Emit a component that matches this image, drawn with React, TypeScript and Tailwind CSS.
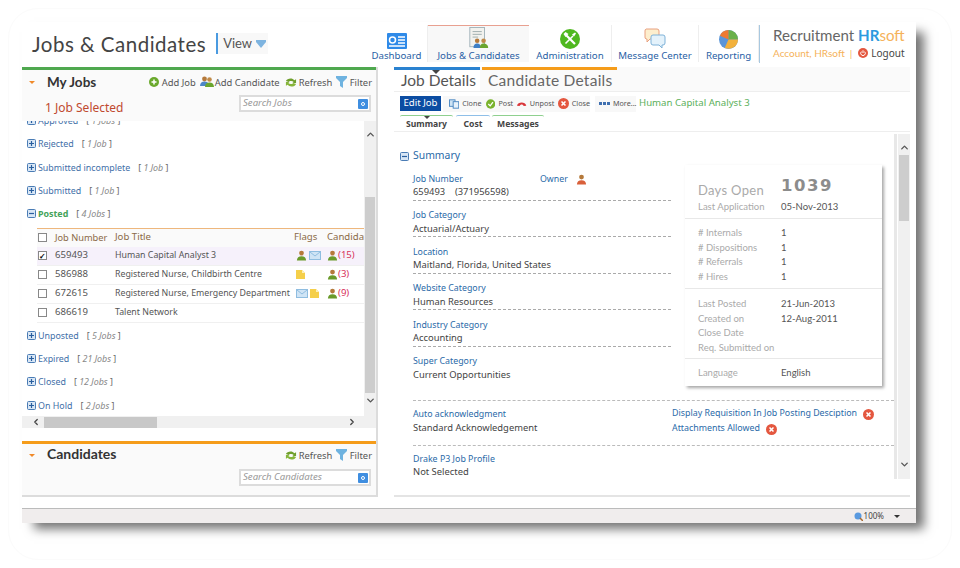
import { ChevronDown, ChevronLeft, ChevronRight, ChevronUp } from "lucide-react";

const bodyFont = { fontFamily: '"Noto Sans", sans-serif' };
const titleFont = { fontFamily: "Lato, sans-serif" };

const Person = ({ color = "#6a9a2a" }: { color?: string }) => (
  <svg width="11" height="11" viewBox="0 0 12 12" className="shrink-0">
    <circle cx="6" cy="3.4" r="2.6" fill="#b5793a" />
    <path d="M1 11.5c0-3.4 2-4.8 5-4.8s5 1.4 5 4.8z" fill={color} />
  </svg>
);

const People = () => (
  <svg width="14" height="12" viewBox="0 0 14 12" className="shrink-0">
    <circle cx="4.500" cy="3" r="2.400" fill="#b5793a" />
    <path d="M0 10c0-3 2-4.400 4.500-4.400S9 7 9 10z" fill="#4c86c6" />
    <circle cx="9.500" cy="3.500" r="2.300" fill="#c08a48" />
    <path d="M5 11c0-3 2-4.400 4.500-4.400S14 8 14 11z" fill="#6aa52e" />
  </svg>
);

const Mail = () => (
  <svg width="12" height="9" viewBox="0 0 12 9" className="shrink-0">
    <rect x="0.5" y="0.5" width="11" height="8" fill="#cfe4f5" stroke="#8fbde0" />
    <path d="M1 1l5 4 5-4" fill="none" stroke="#8fbde0" />
  </svg>
);

const Note = () => (
  <svg width="9" height="9" viewBox="0 0 9 9" className="shrink-0">
    <path d="M0 0h6l3 3v6H0z" fill="#f5cf4a" />
    <path d="M6 0v3h3z" fill="#fdf0b8" />
  </svg>
);

const PlusBox = ({ minus }: { minus?: boolean }) => (
  <svg width="9" height="9" viewBox="0 0 9 9" className="shrink-0">
    <rect x="0.5" y="0.5" width="8" height="8" rx="1" fill="#d8e6f5" stroke="#4a7cb5" />
    <path d={minus ? "M2 4.5h5" : "M2 4.5h5M4.5 2v5"} stroke="#2a5f9e" strokeWidth="1.2" />
  </svg>
);

const RedX = ({ size = 10 }: { size?: number }) => (
  <svg width={size} height={size} viewBox="0 0 10 10" className="shrink-0">
    <circle cx="5" cy="5" r="5" fill="#e4573f" />
    <path d="M3.2 3.2l3.6 3.6M6.8 3.2l-3.6 3.6" stroke="#fff" strokeWidth="1.4" />
  </svg>
);

const Funnel = () => (
  <svg width="11" height="12" viewBox="0 0 11 12" className="-mt-[3px] shrink-0">
    <path d="M0 0h11v2L7 6v6L4 10V6L0 2z" fill="#6fb3e0" />
  </svg>
);

const RefreshIcon = () => (
  <svg width="12" height="11" viewBox="0 0 13 11" className="-mt-[2px] shrink-0">
    <path d="M1 4c1-3 7-4 9-1l2-1v4H8l1.500-1C8 3.500 5 3.500 4 5z" fill="#6f9f2c" />
    <path d="M12 7c-1 3-7 4-9 1L1 9V5h4L3.500 6C5 7.500 8 7.500 9 6z" fill="#86b53a" />
  </svg>
);

const SearchBox = ({ placeholder }: { placeholder: string }) => (
  <div className="flex h-[17px] w-[132px] items-center justify-between border-2 border-[#dcdcdc] bg-white pl-[2px] pr-[1px]">
    <span className="text-[9.6px] italic text-[#999]">{placeholder}</span>
    <span className="flex h-[10px] w-[10px] items-center justify-center rounded-[1px] bg-[#3f8ee0]">
      <span className="h-[4px] w-[4px] rounded-full border border-white" />
    </span>
  </div>
);

const PanelActions = ({ full }: { full?: boolean }) => (
  <div className="mt-[2px] flex items-center text-[9.4px] text-[#555]">
    {full && (
      <>
        <svg width="10" height="10" viewBox="0 0 10 10" className="-mt-[2px] mr-[3px]">
          <circle cx="5" cy="5" r="5" fill="#6aa92c" />
          <path d="M2.500 5h5M5 2.500v5" stroke="#fff" strokeWidth="1.500" />
        </svg>
        <span className="mr-[3px] w-[35px] whitespace-nowrap">Add Job</span>
        <span className="-mt-[2px] mr-[1px] flex">
          <People />
        </span>
        <span className="mr-[4px] w-[66px] whitespace-nowrap">Add Candidate</span>
      </>
    )}
    <RefreshIcon />
    <span className="ml-[2px] mr-[4px] w-[33px] whitespace-nowrap">Refresh</span>
    <Funnel />
    <span className="ml-[3px]">Filter</span>
  </div>
);

const groupsTop = [
  { name: "Approved", count: "1 Jobs" },
  { name: "Rejected", count: "1 Job" },
  { name: "Submitted incomplete", count: "1 Job" },
  { name: "Submitted", count: "1 Job" },
];

const groupsBottom = [
  { name: "Unposted", count: "5 Jobs" },
  { name: "Expired", count: "21 Jobs" },
  { name: "Closed", count: "12 Jobs" },
  { name: "On Hold", count: "2 Jobs" },
];

const jobs = [
  { num: "659493", title: "Human Capital Analyst 3", flags: ["person", "mail"], count: "(15)", checked: true },
  { num: "586988", title: "Registered Nurse, Childbirth Centre", flags: ["note"], count: "(3)" },
  { num: "672615", title: "Registered Nurse, Emergency Department", flags: ["mail", "note"], count: "(9)" },
  { num: "686619", title: "Talent Network", flags: [], count: "" },
];

const GroupRow = ({ name, count }: { name: string; count: string }) => (
  <div className="flex h-[23.33px] items-center pl-[5px] text-[8.9px]">
    <PlusBox />
    <span className="ml-[2px] text-[#3f6fa8]">{name}</span>
    <span className="ml-[8px] text-[#666]">
      [ <span className="italic text-[#888]">{count}</span> ]
    </span>
  </div>
);

const Checkbox = ({ checked }: { checked?: boolean }) => (
  <span className="flex h-[9px] w-[9px] shrink-0 items-center justify-center border border-[#888] bg-white text-[8px] font-bold leading-none text-black">
    {checked ? "✓" : ""}
  </span>
);

const MyJobs = () => (
  <div className="flex min-h-0 flex-1 overflow-hidden">
    <div className="min-w-0 flex-1 overflow-hidden">
      <div className="mt-[-12px]">
        {groupsTop.map((g) => (
          <GroupRow key={g.name} {...g} />
        ))}
        <div className="flex h-[23.33px] items-center pl-[5px] text-[8.9px]">
          <PlusBox minus />
          <span className="ml-[2px] font-bold text-[#45a35a]">Posted</span>
          <span className="ml-[8px] text-[#666]">
            [ <span className="italic text-[#888]">4 Jobs</span> ]
          </span>
        </div>
        <div className="ml-[15px] mt-[2px] w-[340px] overflow-hidden border-t border-[#eeb77d]">
          <div className="flex h-[18px] items-center bg-[#fafafa] pl-[1px] text-[#8a6a48]">
            <Checkbox />
            <span className="ml-[8px] w-[60px] shrink-0 text-[9.25px]">Job Number</span>
            <span className="w-[179px] shrink-0">Job Title</span>
            <span className="w-[33px] shrink-0">Flags</span>
            <span className="shrink-0">Candidates</span>
          </div>
          {jobs.map((j) => (
            <div
              key={j.num}
              className={`flex h-[19px] items-center border-b border-[#f0f0f0] pl-[1px] text-[#555] ${j.checked ? "bg-[#f6f1fb]" : "bg-white"}`}
            >
              <Checkbox checked={j.checked} />
              <span className="ml-[8px] w-[60px] shrink-0">{j.num}</span>
              <span className="w-[179px] shrink-0 whitespace-nowrap text-[8.8px]">{j.title}</span>
              <span className="flex w-[33px] shrink-0 items-center gap-[2px] pl-[2px]">
                {j.flags.map((f) =>
                  f === "person" ? <Person key={f} /> : f === "mail" ? <Mail key={f} /> : <Note key={f} />,
                )}
              </span>
              {j.count && (
                <span className="flex items-center text-[#d8315b]">
                  <Person />
                  {j.count}
                </span>
              )}
            </div>
          ))}
        </div>
        <div className="mt-[1px]">
          {groupsBottom.map((g) => (
            <GroupRow key={g.name} {...g} />
          ))}
        </div>
      </div>
    </div>
    <div className="flex w-[12px] shrink-0 flex-col items-center bg-[#f0f0f0] text-[#555]">
      <ChevronUp size={11} strokeWidth={3} className="mt-[8px]" />
      <div className="mt-[57px] h-[196px] w-[10px] bg-[#cdcdcd]" />
      <ChevronDown size={11} strokeWidth={3} className="mt-[2px]" />
    </div>
  </div>
);

const Field = ({ label, value, owner, last }: { label: string; value: string; owner?: boolean; last?: boolean }) => (
  <div className={`h-[36.5px] pt-[8px] ${last ? "" : "border-b border-dashed border-[#aaa]"}`}>
    <div className="flex h-[14px] items-center text-[8.8px] text-[#2a6aa8]">
      <span className="w-[127px] shrink-0">{label}</span>
      {owner && (
        <span className="flex items-center gap-[8px]">
          Owner <Person color="#d9603a" />
        </span>
      )}
    </div>
    <div className="h-[12px] whitespace-pre text-[9.4px] leading-[12px] text-[#444]">{value}</div>
  </div>
);

const CardRow = ({ label, value }: { label: string; value?: string }) => (
  <div className="flex h-[14.6px] items-center">
    <span className="w-[83px] whitespace-nowrap text-[#aaa]">{label}</span>
    {value && <span className="text-[#555]">{value}</span>}
  </div>
);

const StatsCard = () => (
  <div className="mt-[2px] w-[197px] shrink-0 bg-white text-[9.5px] shadow-[2px_2px_3px_rgba(0,0,0,0.35)]" style={titleFont}>
    <div className="h-[54px] border-b border-[#e8e8e8] pl-[13px] pt-[10px]">
      <div className="flex h-[25px] items-center">
        <span className="mt-[6px] w-[83px] text-[13px] tracking-[0.3px] text-[#aaa]">Days Open</span>
        <span className="mb-[3px] text-[16.5px] font-bold tracking-[1.5px] text-[#8c8c8c]" style={{ fontFamily: '"DejaVu Sans", sans-serif' }}>
          1039
        </span>
      </div>
      <CardRow label="Last Application" value="05-Nov-2013" />
    </div>
    <div className="h-[70px] border-b border-[#e8e8e8] pl-[13px] pt-[7px]">
      <CardRow label="# Internals" value="1" />
      <CardRow label="# Dispositions" value="1" />
      <CardRow label="# Referrals" value="1" />
      <CardRow label="# Hires" value="1" />
    </div>
    <div className="h-[70px] border-b border-[#e8e8e8] pl-[13px] pt-[8px]">
      <CardRow label="Last Posted" value="21-Jun-2013" />
      <CardRow label="Created on" value="12-Aug-2011" />
      <CardRow label="Close Date" />
      <CardRow label="Req. Submitted on" />
    </div>
    <div className="h-[27px] pl-[13px] pt-[7px]">
      <CardRow label="Language" value="English" />
    </div>
  </div>
);

const NavItem = ({ width, label, active, children }: { width: string; label: string; active?: boolean; children: React.ReactNode }) => (
  <div className={`${width} flex h-[37px] flex-col items-center justify-end ${active ? "border-t border-[#e8a090] bg-[#f8f8f8]" : "border-r border-[#eee]"}`}>
    {children}
    <span className="mt-[1px] whitespace-nowrap text-[9.7px] leading-[12px] text-[#2a5fa5]">{label}</span>
  </div>
);

const Header = () => (
  <div className="flex h-[45px] shrink-0 items-start pl-[10px]">
    <div className="mt-[9px] text-[20.5px] leading-[26px] tracking-[0.5px] text-[#444]" style={titleFont}>
      Jobs &amp; Candidates
    </div>
    <div className="ml-[10px] mt-[11px] flex h-[21px] items-center border-l-2 border-[#4a9ae0] bg-[#f8f8f8] pl-[5px] pr-[2px] text-[13px] text-[#555]" style={titleFont}>
      View
      <svg width="10" height="8" viewBox="0 0 10 8" className="ml-[4px]">
        <path d="M0 0h10v2L5 8 0 2z" fill="#7eb4e0" />
      </svg>
    </div>
    <div className="ml-auto mr-[12px] mt-[3px] flex items-start">
      <NavItem width="w-[62px]" label="Dashboard">
        <svg width="20" height="16" viewBox="0 0 20 16">
          <rect width="20" height="16" rx="1" fill="#2f8ae8" />
          <circle cx="5.500" cy="7" r="3" fill="none" stroke="#fff" strokeWidth="1.500" />
          <path d="M11 4h7M11 7h7M11 10h7M2 13h16" stroke="#fff" strokeWidth="1.300" />
        </svg>
      </NavItem>
      <NavItem width="w-[101px]" label="Jobs & Candidates" active>
        <svg width="22" height="22" viewBox="0 0 22 24">
          <rect x="1" y="0.500" width="16" height="21" fill="#f2f2ee" stroke="#9fb0b8" />
          <path d="M4 5h10M4 8h10M4 11h6" stroke="#9aa" />
          <circle cx="9" cy="15" r="2.500" fill="#b5793a" />
          <path d="M5 23c0-4 2-5 4-5s4 1 4 5z" fill="#3f7fc5" />
          <circle cx="16" cy="15" r="2.500" fill="#c08a48" />
          <path d="M12 23c0-4 2-5 4-5s5 1 5 5z" fill="#6aa52e" />
        </svg>
      </NavItem>
      <NavItem width="w-[83px]" label="Administration">
        <svg width="20" height="20" viewBox="0 0 20 20">
          <circle cx="10" cy="10" r="10" fill="#4fb81f" />
          <path d="M6 6l9 9" stroke="#fff" strokeWidth="2.200" />
          <path d="M5.500 14.500L13 7" stroke="#fff" strokeWidth="1.600" />
          <path d="M3.500 5l2-2 3 2-3 3zM12 5.500l3-2 1 1-2 3z" fill="#fff" />
        </svg>
      </NavItem>
      <NavItem width="w-[87px]" label="Message Center">
        <svg width="22" height="21" viewBox="0 0 22 21">
          <path d="M2 1h11a2 2 0 0 1 2 2v6a2 2 0 0 1-2 2H6l-3 3v-3H2a2 2 0 0 1-1-2V3a2 2 0 0 1 1-2z" fill="#fdeecd" stroke="#e8a080" />
          <path d="M9 7h10a2 2 0 0 1 2 2v6a2 2 0 0 1-2 2h-1v3l-3-3H9a2 2 0 0 1-2-2V9a2 2 0 0 1 2-2z" fill="#e4f2fb" stroke="#7fb2d8" />
        </svg>
      </NavItem>
      <NavItem width="w-[60px]" label="Reporting">
        <svg width="19" height="19" viewBox="0 0 20 20">
          <circle cx="10" cy="10" r="10" fill="#5a95d8" />
          <path d="M10 10V0a10 10 0 0 1 10 10z" fill="#6ab04a" />
          <path d="M10 10h10a10 10 0 0 1-14 9z" fill="#f2b13c" />
          <path d="M10 10L1 6a10 10 0 0 1 9-6z" fill="#ee7a30" />
        </svg>
      </NavItem>
      <div className="h-[38px] w-[145px] border-l border-[#a8c8e0] pl-[13px] pt-[1px]" style={titleFont}>
        <div className="whitespace-nowrap text-[15.1px] leading-[18px] text-[#666]">
          Recruitment <span className="font-bold text-[#2c9ae0]">HR</span>
          <span className="text-[#f5b25a]">soft</span>
        </div>
        <div className="mt-[3px] flex items-center whitespace-nowrap text-[10px] leading-[12px] text-[#f5b25a]">
          Account, HRsoft
          <span className="ml-[5px] mr-[6px]">|</span>
          <svg width="10" height="10" viewBox="0 0 10 10" className="shrink-0">
            <circle cx="5" cy="5" r="5" fill="#e4573f" />
            <path d="M3.400 3.600a2.300 2.300 0 1 0 3.200 0M5 2.300v2.700" fill="none" stroke="#fff" strokeWidth="1" />
          </svg>
          <span className="ml-[3px] text-[10px] text-[#444]" style={bodyFont}>Logout</span>
        </div>
      </div>
    </div>
  </div>
);

const LeftPanel = () => (
  <div className="flex w-[356px] shrink-0 flex-col border-b-2 border-r-2 border-[#dcdcdc] text-[9.6px]">
    <div className="h-[54px] shrink-0 border-t-[3px] border-[#4fa84f] bg-[#fafafa] pl-[7px] pr-[4px]">
      <div className="flex h-[25px] items-center">
        <span className="h-0 w-0 border-x-[3px] border-t-[3px] border-x-transparent border-t-[#f08a2a]" />
        <span className="ml-[12px] text-[13.5px] font-bold text-[#333]" style={titleFont}>
          My Jobs
        </span>
        <div className="ml-auto">
          <PanelActions full />
        </div>
      </div>
      <div className="flex items-start justify-between pr-[1px]">
        <span className="ml-[16px] mt-[5px] text-[12px] leading-[16px] text-[#c0492f]">1 Job Selected</span>
        <SearchBox placeholder="Search Jobs" />
      </div>
    </div>
    <MyJobs />
    <div className="flex h-[12px] shrink-0 items-center bg-[#f0f0f0] text-[#444]">
      <ChevronLeft size={10} strokeWidth={3} className="ml-[9px]" />
      <div className="ml-[3px] h-[11px] w-[113px] bg-[#c8c8c8]" />
      <ChevronRight size={10} strokeWidth={3} className="ml-[190px]" />
    </div>
    <div className="h-[13px] shrink-0 bg-white" />
    <div className="h-[54px] shrink-0 border-t-[3px] border-[#f59c1a] bg-[#fafafa] pl-[7px] pr-[4px]">
      <div className="flex h-[23px] items-center">
        <span className="h-0 w-0 border-x-[3px] border-t-[3px] border-x-transparent border-t-[#f08a2a]" />
        <span className="-mt-[5px] ml-[12px] text-[14px] font-bold text-[#333]" style={titleFont}>
          Candidates
        </span>
        <div className="ml-auto">
          <PanelActions />
        </div>
      </div>
      <div className="mt-[2px] flex justify-end pr-[1px]">
        <SearchBox placeholder="Search Candidates" />
      </div>
    </div>
  </div>
);

const RightPanel = () => (
  <div className="ml-[16px] mr-[6px] flex min-w-0 flex-1 flex-col border-b-2 border-[#e4e4e4] text-[9.6px]">
    <div className="flex h-[25px] shrink-0 border-b border-[#eee] bg-[#fafafa]" style={titleFont}>
      <div className="relative h-full w-[86px] border-t-[3px] border-[#2a82d0] bg-white pl-[7px] text-[15.500px] leading-[20px] text-[#555]">
        Job Details
        <span className="absolute left-[38px] top-0 h-0 w-0 border-x-[4px] border-t-[4px] border-x-transparent border-t-[#444]" />
      </div>
      <div className="ml-[2px] h-full w-[135px] border-t-[3px] border-[#f59c1a] pl-[6px] text-[15.500px] leading-[20px] tracking-[0.25px] text-[#666]">
        Candidate Details
      </div>
    </div>
    <div className="flex h-[23px] shrink-0 items-center pl-[6px] text-[7.2px] text-[#555]">
      <span className="flex h-[15px] w-[41px] items-center justify-center bg-[#0c4da2] text-[9.6px] text-white">Edit Job</span>
      <div className="ml-[2px] flex h-[16px] w-[147px] items-center gap-[3px] bg-[#f8f8f8] pl-[6px]">
        <svg width="11" height="10" viewBox="0 0 11 10">
          <rect x="0.500" y="0.500" width="6" height="7" fill="#cfe4f5" stroke="#4a86c0" />
          <rect x="4.500" y="2.500" width="6" height="7" fill="#e8f2fb" stroke="#4a86c0" />
        </svg>
        <span className="w-[18px]">Clone</span>
        <svg width="10" height="10" viewBox="0 0 10 10" className="ml-[3px]">
          <circle cx="5" cy="5" r="5" fill="#7ab32e" />
          <path d="M2.500 5l2 2 3-4" fill="none" stroke="#fff" strokeWidth="1.400" />
        </svg>
        <span className="w-[13px]">Post</span>
        <svg width="10" height="6" viewBox="0 0 11 6" className="ml-[3px]">
          <path d="M0 5c1-5 10-5 11 0L8 5.500C7 3 4 3 3 5.500z" fill="#d9363a" />
        </svg>
        <span className="w-[22px]">Unpost</span>
        <span className="ml-[3px]">
          <RedX size={11} />
        </span>
        Close
      </div>
      <div className="ml-[5px] flex h-[16px] w-[41px] items-center gap-[3px] bg-[#f8f8f8] pl-[4px]">
        <span className="flex gap-[1px]">
          <span className="h-[3px] w-[3px] bg-[#3f6fb0]" />
          <span className="h-[3px] w-[3px] bg-[#3f6fb0]" />
          <span className="h-[3px] w-[3px] bg-[#3f6fb0]" />
        </span>
        More...
      </div>
      <span className="ml-[3px] text-[9.65px] text-[#5cb05c]">Human Capital Analyst 3</span>
    </div>
    <div className="flex h-[17px] shrink-0 border-b border-[#eee] pl-[6px] text-[8.6px] font-bold text-[#444]">
      <div className="relative flex w-[53px] justify-center rounded-t-[2px] border-t border-[#8fd08f] pt-[2px]">
        Summary
        <span className="absolute left-[24px] top-0 h-0 w-0 border-x-[3px] border-t-[3px] border-x-transparent border-t-[#444]" />
      </div>
      <div className="ml-[3px] flex w-[34px] justify-center rounded-t-[2px] border-t border-[#8fbfe8] pt-[2px]">Cost</div>
      <div className="ml-[2px] flex w-[52px] justify-center rounded-t-[2px] border-t border-[#8fd08f] pt-[2px]">Messages</div>
    </div>
    <div className="flex min-h-0 flex-1">
      <div className="min-w-0 flex-1 pl-[6px]">
        <div className="mt-[17px] flex h-[14px] items-center">
          <PlusBox minus />
          <span className="ml-[4px] text-[10.4px] text-[#2a6aa8]">Summary</span>
        </div>
        <div className="flex">
          <div className="ml-[13px] mt-[1.4px] w-[258px]">
            <Field label="Job Number" value="659493    (371956598)" owner />
            <Field label="Job Category" value="Actuarial/Actuary" />
            <Field label="Location" value="Maitland, Florida, United States" />
            <Field label="Website Category" value="Human Resources" />
            <Field label="Industry Category" value="Accounting" />
            <Field label="Super Category" value="Current Opportunities" last />
          </div>
          <div className="ml-[14px]">
            <StatsCard />
          </div>
        </div>
        <div className="ml-[13px] mt-[14px] border-b border-dashed border-[#bbb]" />
        <div className="ml-[13px] flex h-[45px] border-b border-dashed border-[#bbb] pt-[6px]">
          <div className="w-[259px]">
            <div className="h-[14px] text-[8.8px] leading-[14px] text-[#2a6aa8]">Auto acknowledgment</div>
            <div className="text-[9.4px] text-[#444]">Standard Acknowledgement</div>
          </div>
          <div className="text-[8.85px] text-[#2a6aa8]">
            <div className="flex h-[14px] items-center gap-[6px]">
              Display Requisition In Job Posting Desciption <RedX size={11} />
            </div>
            <div className="mt-[1px] flex h-[14px] items-center gap-[6px]">
              Attachments Allowed <RedX size={11} />
            </div>
          </div>
        </div>
        <div className="ml-[13px] mt-[6px] h-[13px] text-[8.85px] leading-[14px] text-[#2a6aa8]">Drake P3 Job Profile</div>
        <div className="ml-[13px] text-[9.4px] text-[#444]">Not Selected</div>
      </div>
      <div className="mb-[16px] mt-[2px] flex w-[16px] shrink-0 border-l-[3px] border-[#e8e8e8] pl-[1px]">
        <div className="flex w-[12px] flex-col items-center bg-[#f0f0f0] text-[#555]">
          <ChevronUp size={11} strokeWidth={3} className="mt-[8px]" />
          <div className="mt-[2px] h-[66px] w-[10px] bg-[#cdcdcd]" />
          <ChevronDown size={11} strokeWidth={3} className="mb-[9px] mt-auto" />
        </div>
      </div>
    </div>
  </div>
);

export default function App() {
  return (
    <div className="h-[568px] w-[960px] overflow-hidden bg-white p-[8px]" style={bodyFont}>
      <div className="h-[552px] w-[944px] rounded-[30px] border border-[#fbfbfb] pl-[13px] pt-[13px]">
        <div className="flex h-[501px] w-[894px] flex-col bg-white shadow-[10px_8px_10px_-2px_rgba(0,0,0,0.55)]">
          <Header />
          <div className="flex h-[430px] shrink-0">
            <LeftPanel />
            <RightPanel />
          </div>
          <div className="mt-auto flex h-[15px] shrink-0 items-center justify-end border-t border-[#bbb] bg-[#f0eded] pr-[16px] text-[8px] text-[#444]">
            <svg width="9" height="9" viewBox="0 0 9 9" className="mr-[1px]">
              <circle cx="4" cy="4" r="3.500" fill="#5a9ae0" />
              <path d="M6 6l3 3" stroke="#a86a30" strokeWidth="1.500" />
            </svg>
            100%
            <span className="ml-[10px] h-0 w-0 border-x-[3px] border-t-[3px] border-x-transparent border-t-[#333]" />
          </div>
        </div>
      </div>
    </div>
  );
}
